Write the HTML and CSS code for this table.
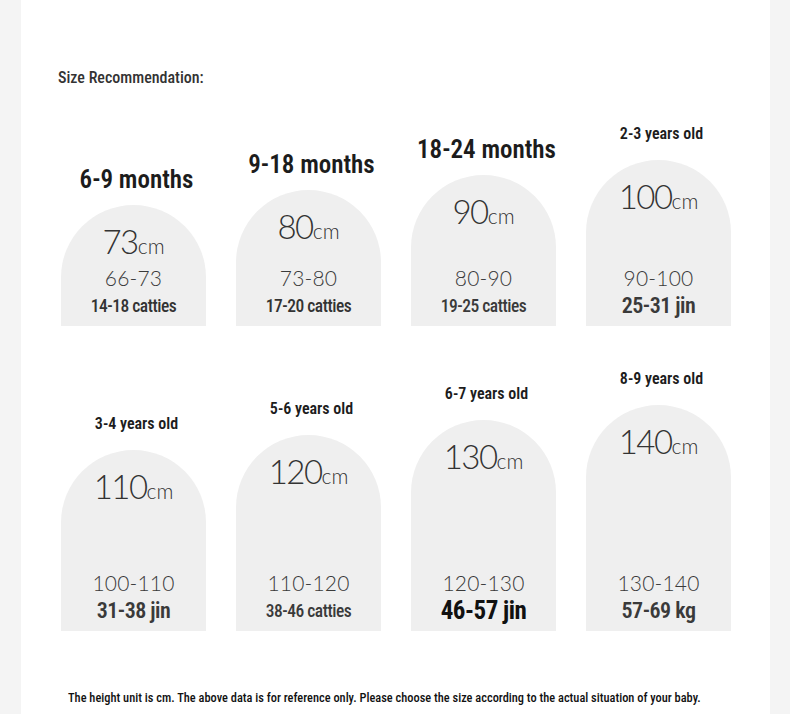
FILE: index.html
```html
<!DOCTYPE html>
<html lang="en">
<head>
<meta charset="utf-8">
<title>Size Recommendation</title>
<link rel="stylesheet" href="styles.css">
</head>
<body>
<div class="page">
  <div class="title">Size Recommendation:</div>

  <div class="row row-1">
    <div class="col">
      <div class="label label-lg">6-9 months</div>
      <div class="arch h121">
        <div class="height">73<span class="unit">cm</span></div>
        <div class="range">66-73</div>
        <div class="weight w-sm">14-18 catties</div>
      </div>
    </div>
    <div class="col">
      <div class="label label-lg">9-18 months</div>
      <div class="arch h136">
        <div class="height">80<span class="unit">cm</span></div>
        <div class="range">73-80</div>
        <div class="weight w-sm">17-20 catties</div>
      </div>
    </div>
    <div class="col">
      <div class="label label-lg">18-24 months</div>
      <div class="arch h151">
        <div class="height">90<span class="unit">cm</span></div>
        <div class="range">80-90</div>
        <div class="weight w-xs">19-25 catties</div>
      </div>
    </div>
    <div class="col">
      <div class="label label-sm">2-3 years old</div>
      <div class="arch h166">
        <div class="height">100<span class="unit">cm</span></div>
        <div class="range">90-100</div>
        <div class="weight w-lg">25-31 jin</div>
      </div>
    </div>
  </div>

  <div class="row row-2">
    <div class="col">
      <div class="label label-sm">3-4 years old</div>
      <div class="arch h181">
        <div class="height">110<span class="unit">cm</span></div>
        <div class="range">100-110</div>
        <div class="weight w-lg">31-38 jin</div>
      </div>
    </div>
    <div class="col">
      <div class="label label-sm">5-6 years old</div>
      <div class="arch h196">
        <div class="height">120<span class="unit">cm</span></div>
        <div class="range">110-120</div>
        <div class="weight w-xs">38-46 catties</div>
      </div>
    </div>
    <div class="col">
      <div class="label label-sm">6-7 years old</div>
      <div class="arch h211">
        <div class="height">130<span class="unit">cm</span></div>
        <div class="range">120-130</div>
        <div class="weight w-xl">46-57 jin</div>
      </div>
    </div>
    <div class="col">
      <div class="label label-sm">8-9 years old</div>
      <div class="arch h226">
        <div class="height">140<span class="unit">cm</span></div>
        <div class="range">130-140</div>
        <div class="weight w-lg">57-69 kg</div>
      </div>
    </div>
  </div>

  <div class="note">The height unit is cm. The above data is for reference only. Please choose the size according to the actual situation of your baby.</div>
</div>
</body>
</html>
```

FILE: styles.css
```css
html, body {
  margin: 0;
  padding: 0;
}
body {
  background: #f4f4f4;
  font-family: "Roboto", "Open Sans", sans-serif;
  font-stretch: 75%;
  color: #222;
}
.page {
  box-sizing: border-box;
  width: 749px;
  height: 714px;
  margin-left: 21px;
  background: #ffffff;
  padding: 68px 0 0 40px;
  overflow: hidden;
}
.title {
  margin-left: -3px;
  font-size: 16px;
  line-height: 20px;
  font-weight: 500;
  color: #333;
}
.row {
  display: grid;
  grid-template-columns: repeat(4, 145px);
  column-gap: 30px;
  align-items: end;
}
.row-1 {
  height: 206px;
  margin-top: 32px;
}
.row-2 {
  height: 271px;
  margin-top: 34px;
}
.col {
  display: flex;
  flex-direction: column;
  align-items: center;
}
.label {
  color: #1c1c1c;
  white-space: nowrap;
  margin-left: 6px;
}
.label-lg {
  font-size: 25px;
  line-height: 30px;
  font-weight: 600;
  margin-bottom: 10px;
}
.label-sm {
  font-size: 16px;
  line-height: 20px;
  font-weight: 600;
  margin-bottom: 16px;
}
.arch {
  box-sizing: border-box;
  width: 145px;
  background: #efefef;
  border-radius: 73px 73px 0 0;
  display: flex;
  flex-direction: column;
  align-items: center;
  padding: 18px 0 7px;
}
.h121 { height: 121px; }
.h136 { height: 136px; }
.h151 { height: 151px; }
.h166 { height: 166px; }
.h181 { height: 181px; }
.h196 { height: 196px; }
.h211 { height: 211px; }
.h226 { height: 226px; }
.height {
  font-family: "Lato", "Open Sans", sans-serif;
  font-stretch: 100%;
  font-weight: 300;
  font-size: 33px;
  line-height: 36px;
  color: #333;
  letter-spacing: -1.5px;
}
.unit {
  font-size: 21px;
  letter-spacing: 0;
}
.range {
  margin-top: auto;
  font-family: "Lato", "Open Sans", sans-serif;
  font-stretch: 100%;
  font-weight: 300;
  font-size: 21px;
  line-height: 26px;
  letter-spacing: 0.2px;
  color: #3a3a3a;
  margin-bottom: 2px;
}
.weight {
  line-height: 26px;
  color: #333;
  white-space: nowrap;
  letter-spacing: -0.5px;
}
.w-sm { font-size: 17.5px; font-weight: 500; }
.w-xs { font-size: 17.5px; color: #3a3a3a; font-weight: 500; }
.w-lg { font-size: 22px; font-weight: 600; color: #3a3a3a; }
.w-xl { font-size: 25px; font-weight: 700; color: #111; }
.note {
  margin-top: 59px;
  margin-left: 7px;
  font-size: 12.4px;
  line-height: 16px;
  font-weight: 500;
  color: #111;
  white-space: nowrap;
}
```
